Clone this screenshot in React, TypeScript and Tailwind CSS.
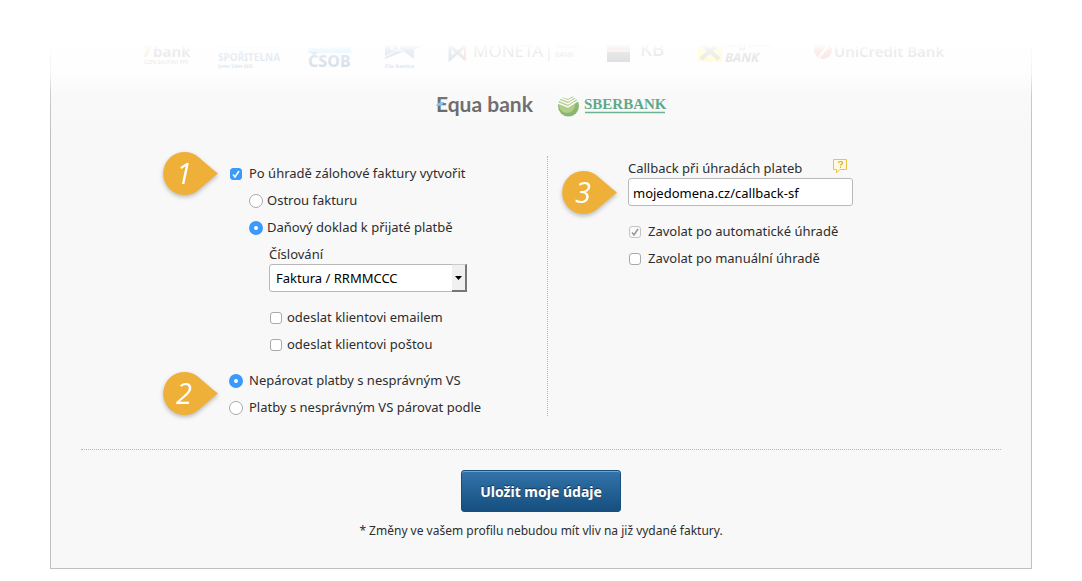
import { useState } from "react";
import type { ReactNode } from "react";

const SANS = "'Noto Sans', 'Open Sans', sans-serif";

function FadedLogos() {
  return (
    <div className="flex justify-center gap-6">
      <svg width="62" height="38" viewBox="0 -10 62 38" role="img" aria-label="bank, člen skupiny PPF" fontFamily={SANS}>
        <path d="M12 0h8l-5 12h-4l4-9h-3z" fill="#c9b458" />
        <text x="21" y="12" fontSize="15" fontWeight="700" fill="#555">bank</text>
        <text x="12" y="19" fontSize="5" fill="#555">ČLEN SKUPINY PPF</text>
      </svg>
      <svg width="66" height="38" viewBox="0 -10 66 38" role="img" aria-label="Česká spořitelna" fontFamily={SANS}>
        <path d="M2 1h62v2H2z" fill="#e9a0a0" opacity="0.5" />
        <text x="0" y="16" fontSize="10" fontWeight="700" fill="#2a64a4">SPOŘITELNA</text>
        <text x="0" y="23" fontSize="5" fontWeight="700" fill="#2a64a4">Jsme Vám blíž.</text>
      </svg>
      <svg width="45" height="38" viewBox="2 -10 45 38" role="img" aria-label="ČSOB" fontFamily={SANS}>
        <path d="M2 3l43-1v6H2z" fill="#5cc4f0" />
        <text x="2" y="22" fontSize="16" fontWeight="800" fill="#004080">ČSOB</text>
      </svg>
      <svg width="46" height="38" viewBox="0 -10 46 38" role="img" aria-label="Fio banka" fontFamily={SANS}>
        <path d="M8 0h29v2l9-2-9 5v9L26 7 8 14z" fill="#2a5c9c" />
        <path d="M8 12l11-7 7 1 10 8" stroke="#fff" strokeWidth="1" fill="none" />
        <path d="M15 0v5M22 0v4" stroke="#fff" strokeWidth="2" fill="none" />
        <text x="8" y="23" fontSize="6" fontWeight="700" fill="#2a64a4">Fio banka</text>
      </svg>
      <svg width="134" height="38" viewBox="0 -10 134 38" role="img" aria-label="Moneta Money Bank" fontFamily={SANS}>
        <path d="M3 0v14L18 1M18 14L3 1" fill="none" stroke="#33517d" strokeWidth="3" />
        <path d="M12 8l6 6V0" fill="none" stroke="#d33" strokeWidth="2" />
        <text x="26" y="12" fontSize="17" fill="#555">MONETA</text>
        <path d="M102 -6v22" stroke="#555" />
        <text x="108" y="3" fontSize="7" fill="#555">MONEY</text>
        <text x="108" y="12" fontSize="7" fill="#555">BANK</text>
      </svg>
      <svg width="69" height="38" viewBox="0 -10 69 38" role="img" aria-label="KB" fontFamily={SANS}>
        <path d="M2 -6h23V6H2z" fill="#c33" />
        <path d="M2 6h23v11H2z" fill="#222" />
        <path d="M2 6h23" stroke="#fff" />
        <text x="35" y="11" fontSize="19" fontWeight="500" fill="#555">KB</text>
      </svg>
      <svg width="92" height="38" viewBox="0 -10 92 38" role="img" aria-label="Raiffeisen Bank" fontFamily={SANS}>
        <path d="M0 -7h24v24H0z" fill="#ffe600" />
        <path d="M3 14L18 1M6 1l15 13" stroke="#666" strokeWidth="4" />
        <text x="27" y="2" fontSize="10" fontWeight="700" fontStyle="italic" fill="#444">Raiffeisen</text>
        <text x="27" y="17" fontSize="13" fontWeight="700" fontStyle="italic" fill="#444">BANK</text>
      </svg>
      <svg width="136" height="38" viewBox="0 -10 136 38" role="img" aria-label="UniCredit Bank" fontFamily={SANS}>
        <circle cx="9" cy="5" r="9" fill="#e05050" />
        <path d="M5 12l9-11" stroke="#fff" strokeWidth="2" />
        <text x="20" y="12" fontSize="15" fontWeight="600" fill="#555">UniCredit Bank</text>
      </svg>
    </div>
  );
}

function EquaLogo() {
  return (
    <svg width="98" height="30" viewBox="0 -6 98 30" role="img" aria-label="Equa bank" fontFamily="Lato, sans-serif">
      <text x="0" y="17" fontSize="21" fontWeight="700" fill="#5c5c5c">Equa bank</text>
      <path d="M0 11c1-3 4-4 8-4-1 3-3 4-8 4z" fill="#5cc4f4" />
    </svg>
  );
}

function SberbankLogo() {
  return (
    <svg width="109" height="30" viewBox="0 -6 109 30" role="img" aria-label="Sberbank" fontFamily="'Liberation Serif', serif">
      <circle cx="10.500" cy="11" r="10.500" fill="#7fae60" />
      <circle cx="9" cy="10" r="8" fill="#a6c878" />
      <path d="M-1 -1h20l-9 5-11-3z" fill="#fafafa" />
      <path d="M0 2l10 4 10-6M0 5l10 4 11-7M0 8l10 4 11-7" fill="none" stroke="#fafafa" strokeWidth="1.500" />
      <text x="26" y="14" fontSize="15" fontWeight="700" fill="#4a9c78">SBERBANK</text>
      <path d="M27 17.500h80" stroke="#5fa987" strokeWidth="1.500" />
    </svg>
  );
}

function StepBadge({ step }: { step: number }) {
  return (
    <svg width="55" height="43" viewBox="0 0 55 43" className="shrink-0 overflow-visible drop-shadow-[0_2px_2px_rgba(0,0,0,0.25)]">
      <path d="M55 21.5C47 15 41 10 36 5.500A21.500 21.500 0 1 0 36 37.500C41 33 47 28 55 21.500Z" fill="#efb039" />
      <text x="21" y="32" textAnchor="middle" fontFamily="'Open Sans', sans-serif" fontSize="29" fontStyle="italic" fill="#fff">
        {step}
      </text>
    </svg>
  );
}

type OptionProps = {
  type: "checkbox" | "radio";
  name?: string;
  checked: boolean;
  disabled?: boolean;
  nested?: boolean;
  onChange?: () => void;
  children: ReactNode;
};

function Option({ type, name, checked, disabled, nested, onChange, children }: OptionProps) {
  const shape =
    type === "radio"
      ? "size-[14px] rounded-full checked:bg-white checked:border-[5px]"
      : "size-3 mx-px rounded-[3px] checked:bg-[#3b99fc]";
  return (
    <label className={`flex items-center whitespace-nowrap ${nested ? "gap-1" : "gap-[6px]"}`}>
      <span className="relative flex items-center">
        <input
          type={type}
          name={name}
          checked={checked}
          disabled={disabled}
          onChange={onChange}
          className={`appearance-none border border-[#a9a9a9] bg-white checked:border-[#3b99fc] disabled:border-[#c4c4c4] disabled:bg-[#fafafa] ${shape}`}
        />
        {type === "checkbox" && checked && (
          <svg width="12" height="12" viewBox="0 0 12 12" className="pointer-events-none absolute left-px">
            <path d="M3 6.500l2 2.500 4-6" fill="none" stroke={disabled ? "#999" : "#fff"} strokeWidth="1.600" />
          </svg>
        )}
      </span>
      {children}
    </label>
  );
}

export default function App() {
  const [createInvoice, setCreateInvoice] = useState(true);
  const [docType, setDocType] = useState("tax");
  const [sendEmail, setSendEmail] = useState(false);
  const [sendPost, setSendPost] = useState(false);
  const [pairing, setPairing] = useState("none");
  const [callManual, setCallManual] = useState(false);
  const [callback, setCallback] = useState("mojedomena.cz/callback-sf");

  return (
    <main className="relative bg-white px-[50px] pb-3 font-['Noto_Sans','Open_Sans',sans-serif] text-[13px] leading-[17px] text-[#2d2d2d]">
      <form className="border-x border-b border-[#c0c0c0] bg-[#f8f8f8] px-[30px] pt-[35px] pb-[29px]" onSubmit={(e) => e.preventDefault()}>
        <FadedLogos />
        <div className="mt-4 flex justify-center gap-6 pl-5">
          <EquaLogo />
          <SberbankLogo />
        </div>

        <div className="mt-[37px] grid grid-cols-[467fr_453fr]">
          {/* Invoices and pairing */}
          <div className="flex flex-col gap-[19px] border-r border-dotted border-[#b5b5b5] pt-2 pl-[82px]">
            <div className="flex items-start gap-[11px]">
              <div className="-mt-3">
                <StepBadge step={1} />
              </div>
              <div className="mt-px flex flex-col gap-[10px]">
                <Option type="checkbox" checked={createInvoice} onChange={() => setCreateInvoice(!createInvoice)}>
                  Po úhradě zálohové faktury vytvořit
                </Option>
                <div className="flex flex-col gap-[10px] pl-5">
                  <Option type="radio" name="doc" nested checked={docType === "invoice"} onChange={() => setDocType("invoice")}>
                    Ostrou fakturu
                  </Option>
                  <Option type="radio" name="doc" nested checked={docType === "tax"} onChange={() => setDocType("tax")}>
                    Daňový doklad k přijaté platbě
                  </Option>
                  <div className="pl-5">
                    <label htmlFor="numbering" className="block">Číslování</label>
                    <div className="relative mt-px w-[198px]">
                      <select
                        id="numbering"
                        className="h-7 w-full appearance-none rounded-[3px] border border-[#b8b8b8] bg-white pt-px pl-[6px] text-black"
                      >
                        <option>Faktura / RRMMCCC</option>
                      </select>
                      <span className="pointer-events-none absolute inset-y-0 right-0 flex w-[15px] items-center justify-center border-t border-r-2 border-b-2 border-t-[#ccc] border-r-[#777] border-b-[#777] bg-[#f0f0f0]">
                        <svg width="7" height="4" viewBox="0 0 7 4">
                          <path d="M0 0h7L3.500 4z" fill="#000" />
                        </svg>
                      </span>
                    </div>
                    <div className="mt-[17px] flex flex-col gap-[10px]">
                      <Option type="checkbox" nested checked={sendEmail} onChange={() => setSendEmail(!sendEmail)}>
                        odeslat klientovi emailem
                      </Option>
                      <Option type="checkbox" nested checked={sendPost} onChange={() => setSendPost(!sendPost)}>
                        odeslat klientovi poštou
                      </Option>
                    </div>
                  </div>
                </div>
              </div>
            </div>

            <div className="flex items-start gap-[11px]">
              <StepBadge step={2} />
              <div className="flex flex-col gap-[10px]">
                <Option type="radio" name="pairing" checked={pairing === "none"} onChange={() => setPairing("none")}>
                  Nepárovat platby s nesprávným VS
                </Option>
                <Option type="radio" name="pairing" checked={pairing === "by"} onChange={() => setPairing("by")}>
                  Platby s nesprávným VS párovat podle
                </Option>
              </div>
            </div>
          </div>

          {/* Callback */}
          <div className="flex items-start gap-[11px] pt-1 pl-[14px]">
            <div className="mt-[11px]">
              <StepBadge step={3} />
            </div>
            <div>
              <div className="flex w-[225px] justify-between">
                <label htmlFor="callback">Callback při úhradách plateb</label>
                <button type="button" aria-label="Nápověda" className="mr-[5px] -mt-1">
                  <svg width="15" height="15" viewBox="0 0 15 15">
                    <path d="M.5 .5h13v10h-7l-3 3.500v-3.500h-3z" fill="#fffbe0" stroke="#eec248" />
                    <path d="M5.500 4c0-2 4-2 4 0 0 1.300-2 1.200-2 2.500M7.500 7.500v1.300" fill="none" stroke="#e0a030" strokeWidth="1.200" />
                  </svg>
                </button>
              </div>
              <input
                id="callback"
                type="text"
                value={callback}
                onChange={(e) => setCallback(e.target.value)}
                className="mt-px block h-7 w-[225px] rounded-[3px] border border-[#b8b8b8] bg-white px-1 pt-px text-black"
              />
              <div className="mt-[17px] flex flex-col gap-[10px]">
                <Option type="checkbox" checked disabled>
                  Zavolat po automatické úhradě
                </Option>
                <Option type="checkbox" checked={callManual} onChange={() => setCallManual(!callManual)}>
                  Zavolat po manuální úhradě
                </Option>
              </div>
            </div>
          </div>
        </div>

        <div className="mt-[33px] flex flex-col items-center border-t border-dotted border-[#b5b5b5] pt-5">
          <button
            type="submit"
            className="h-[42px] w-40 rounded-[3px] border border-[#164e7c] bg-linear-to-b from-[#3274ab] to-[#164f7f] text-[14px] font-bold text-white shadow-[inset_0_1px_0_#6fa3cf] [text-shadow:0_-1px_1px_rgba(0,0,0,0.5)]"
          >
            Uložit moje údaje
          </button>
          <p className="mt-[10px] text-[12px]">* Změny ve vašem profilu nebudou mít vliv na již vydané faktury.</p>
        </div>
      </form>

      {/* White fade over the top of the page */}
      <div className="pointer-events-none absolute inset-x-0 top-0 h-[140px] bg-[linear-gradient(to_bottom,#fff_44px,rgba(255,255,255,0.9)_51px,rgba(255,255,255,0.82)_72px,rgba(255,255,255,0.15)_97px,rgba(255,255,255,0)_140px)]" />
    </main>
  );
}
